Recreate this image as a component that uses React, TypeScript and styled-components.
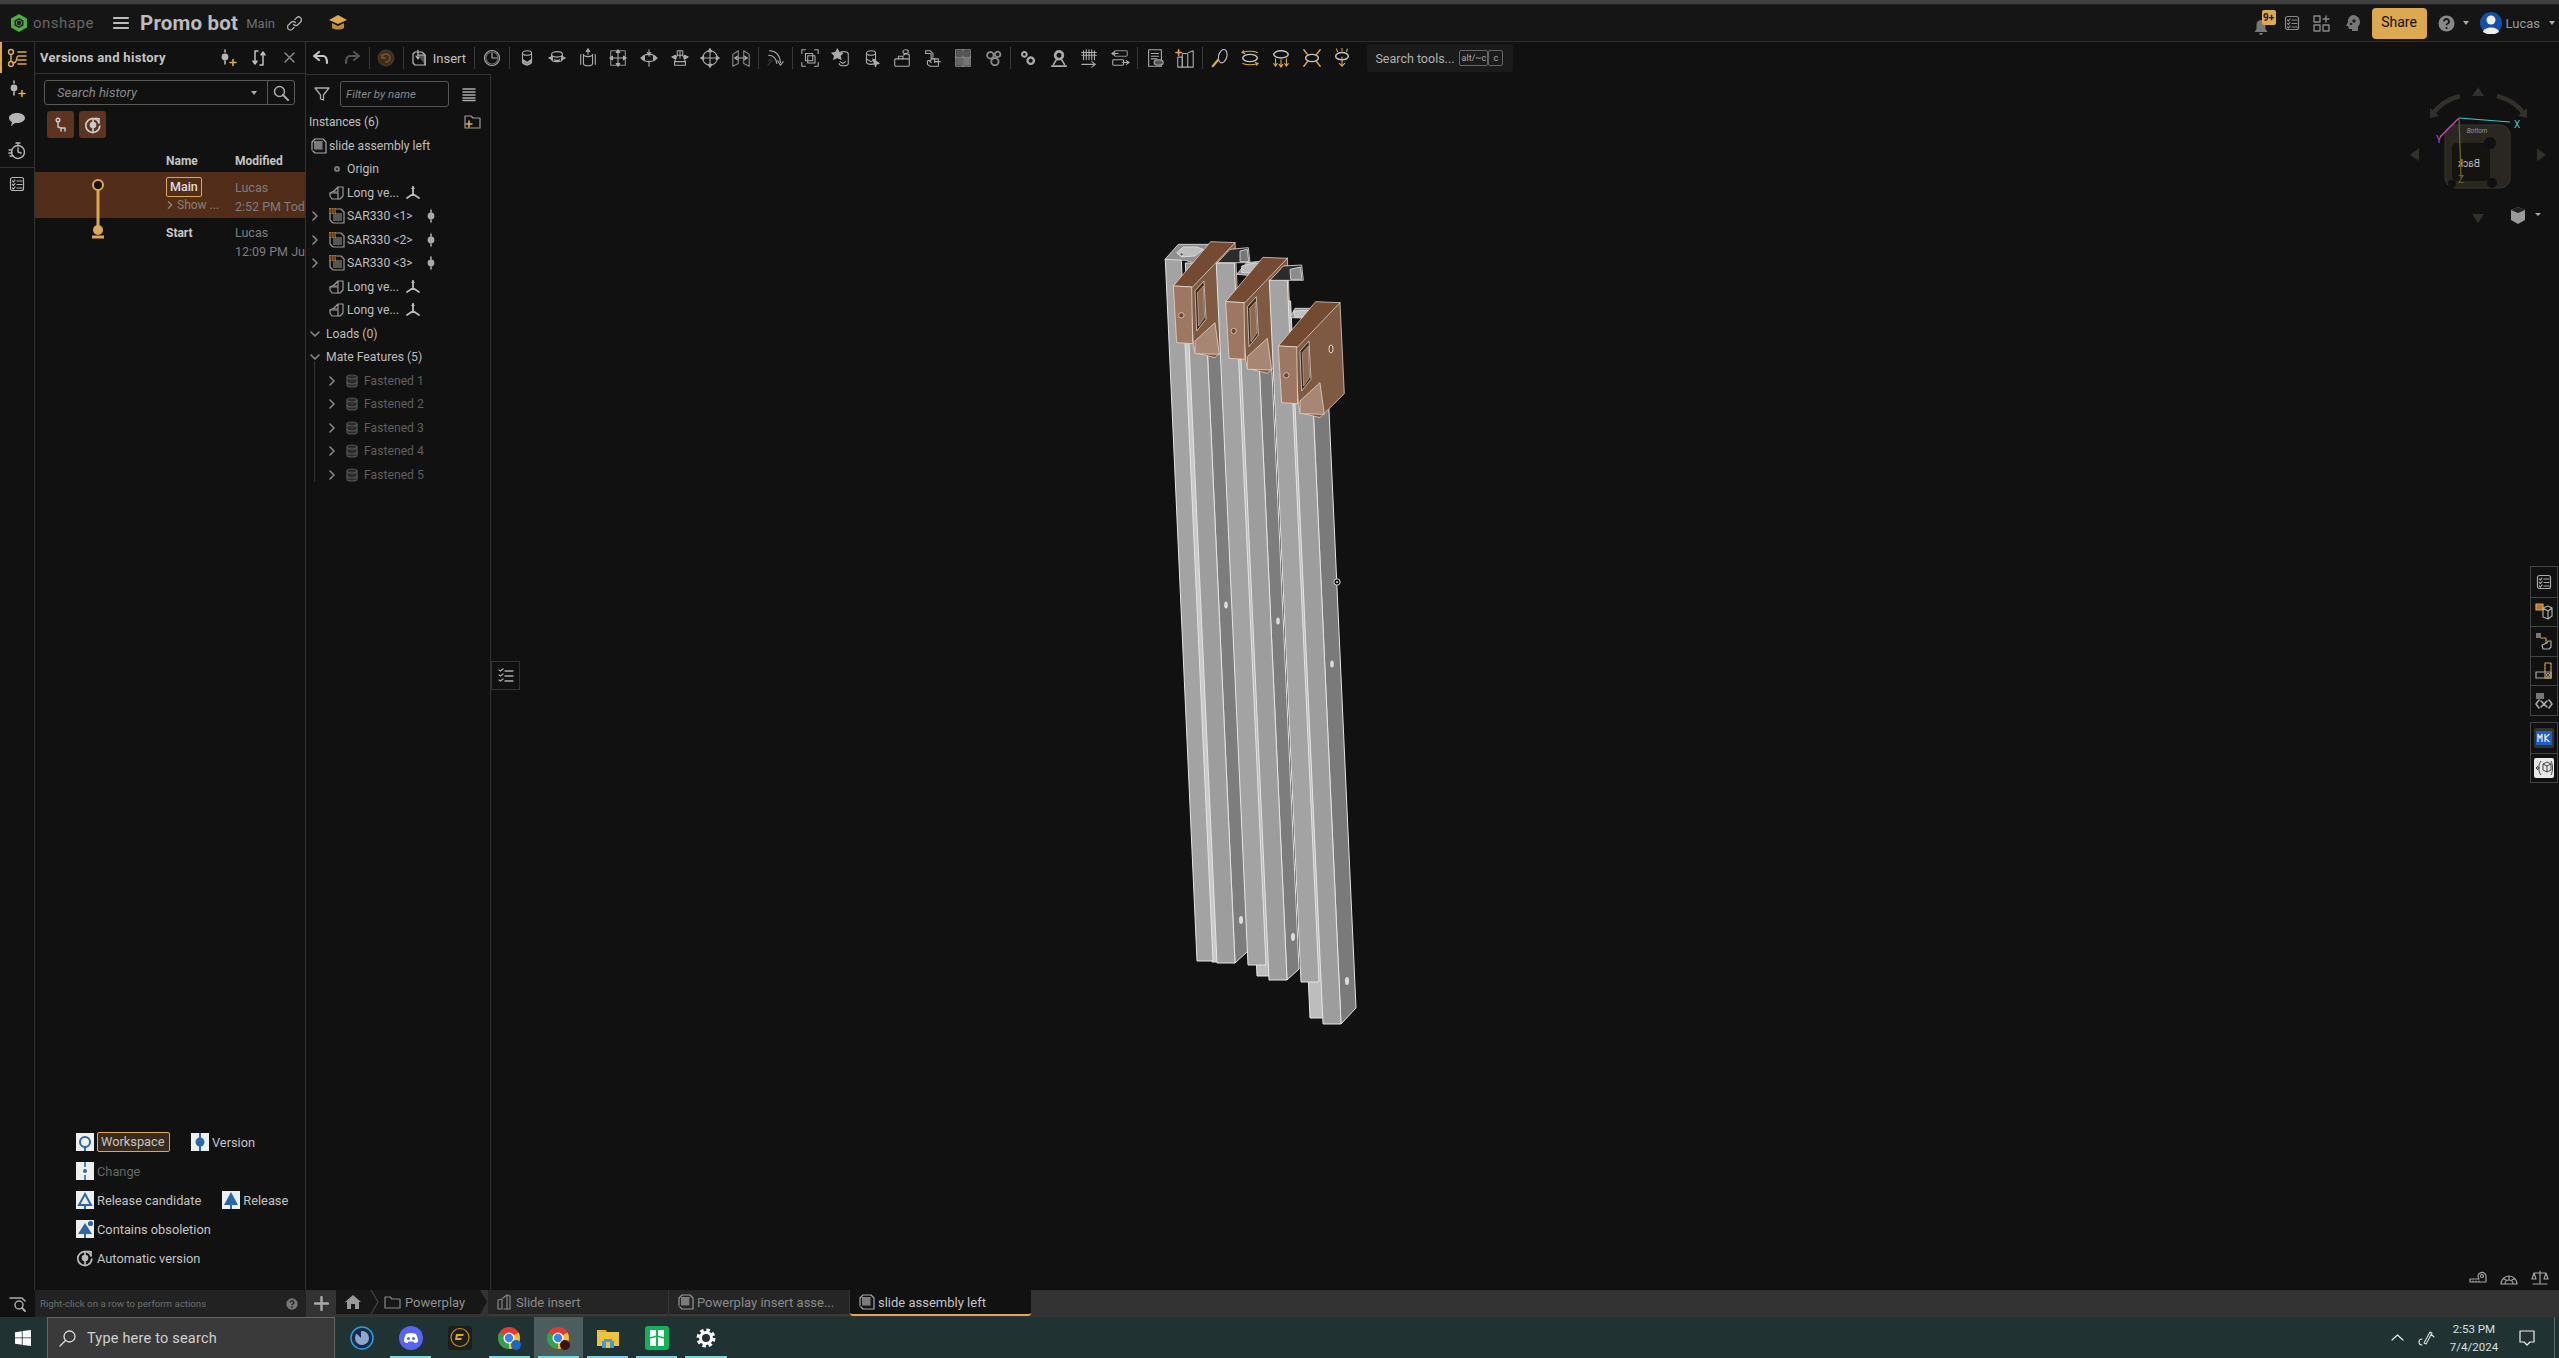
import React from 'react';
import styled, { createGlobalStyle } from 'styled-components';

const GlobalStyle = createGlobalStyle`
  html, body { margin: 0; padding: 0; background: #111; }
  body { font-family: Roboto, "Liberation Sans", sans-serif; font-size: 12px; color: #bbb; overflow: hidden; }
  * { box-sizing: border-box; }
`;

const ORANGE = '#dca850';

const S = {
  Page: styled.div`
    width: 2559px;
    height: 1358px;
    display: flex;
    flex-direction: column;
    background: #111;
  `,
  TopStrip: styled.div`
    height: 5px;
    background: #3f3f3f;
    border-bottom: 1px solid #222;
    flex: none;
  `,
  Header: styled.div`
    height: 36px;
    flex: none;
    display: flex;
    align-items: center;
    background: #151515;
    padding-left: 10px;
    padding-right: 4px;
  `,
  LogoText: styled.span`
    font-size: 15px;
    letter-spacing: 0.5px;
    color: #666;
    margin-left: 5px;
    width: 79px;
  `,
  DocTitle: styled.span`
    font-size: 20.5px;
    font-weight: 700;
    color: #bcbcbc;
    margin-left: 10px;
    letter-spacing: 0.2px;
  `,
  DocBranch: styled.span`
    font-size: 13px;
    color: #6f6f6f;
    margin-left: 8px;
    margin-right: 12px;
  `,
  HeaderRight: styled.div`
    margin-left: auto;
    display: flex;
    align-items: center;
  `,
  BellWrap: styled.div`
    position: relative;
    width: 22px;
    height: 24px;
    margin-right: 9px;
    display: flex;
    align-items: flex-end;
  `,
  BellBadge: styled.span`
    position: absolute;
    right: -1px;
    top: -1px;
    width: 14px;
    height: 15px;
    background: ${ORANGE};
    border-radius: 2px;
    color: #111;
    font-size: 10px;
    font-weight: 700;
    text-align: center;
    line-height: 15px;
  `,
  ShareButton: styled.div`
    width: 55px;
    height: 31px;
    background: ${ORANGE};
    border-radius: 4px;
    color: #111;
    font-size: 14px;
    text-align: center;
    line-height: 29px;
    margin-left: 11px;
    margin-right: 11px;
  `,
  UserName: styled.span`
    font-size: 13px;
    color: #999;
    margin-left: 4px;
    margin-right: 9px;
  `,
  Caret: styled.span`
    width: 0;
    height: 0;
    border-left: 3.5px solid transparent;
    border-right: 3.5px solid transparent;
    border-top: 4px solid #aaa;
    display: inline-block;
  `,
  Main: styled.div`
    flex: 1;
    min-height: 0;
    display: flex;
    border-top: 1px solid #2e2e2e;
  `,
  Rail: styled.div`
    width: 35px;
    flex: none;
    display: flex;
    flex-direction: column;
    align-items: stretch;
    border-right: 1px solid #333;
  `,
  RailItem: styled.div<{ $active?: boolean }>`
    height: 31px;
    display: flex;
    align-items: center;
    justify-content: center;
    color: #b5b5b5;
    border-left: 2px solid ${p => (p.$active ? ORANGE : 'transparent')};
    padding-right: 2px;
  `,
  RailRule: styled.div`
    height: 1px;
    background: #333;
    margin: 1px 0 0;
  `,
  History: styled.div`
    width: 271px;
    flex: none;
    display: flex;
    flex-direction: column;
    border-right: 1px solid #333;
  `,
  PanelHeader: styled.div`
    height: 32px;
    flex: none;
    display: flex;
    align-items: center;
    padding-left: 5px;
    border-bottom: 1px solid #333;
    color: #c4c4c4;
  `,
  PanelTitle: styled.span`
    font-size: 13px;
    font-weight: 700;
    width: 178px;
    letter-spacing: 0.3px;
  `,
  PanelTool: styled.span`
    width: 32px;
    display: flex;
    justify-content: center;
  `,
  SearchBox: styled.div`
    margin: 6px 10px 0 9px;
    height: 25px;
    border: 1px solid #5a5a55;
    border-radius: 3px;
    display: flex;
    align-items: center;
    flex: none;
  `,
  SearchText: styled.span`
    flex: 1;
    font-style: italic;
    font-size: 13px;
    color: #888;
    padding-left: 12px;
  `,
  SearchButton: styled.span`
    width: 27px;
    height: 23px;
    border-left: 1px solid #5a5a55;
    margin-left: 10px;
    display: flex;
    align-items: center;
    justify-content: center;
    color: #aaa;
  `,
  FilterButtons: styled.div`
    display: flex;
    gap: 5px;
    margin: 6px 0 0 12px;
    flex: none;
  `,
  FilterButton: styled.span`
    width: 27px;
    height: 27px;
    background: #5c3420;
    border-radius: 3px;
    display: flex;
    align-items: center;
    justify-content: center;
    color: #c9c9c9;
  `,
  TableHead: styled.div`
    height: 34px;
    flex: none;
    display: grid;
    grid-template-columns: 131px 69px 1fr;
    align-items: end;
    padding-bottom: 4px;
    font-weight: 700;
    font-size: 12px;
    color: #c4c4c4;
  `,
  TableRow: styled.div<{ $selected?: boolean }>`
    height: 46px;
    flex: none;
    display: grid;
    grid-template-columns: 131px 69px 1fr;
    background: ${p => (p.$selected ? '#522d1a' : 'transparent')};
    overflow: hidden;
    position: relative;
  `,
  NameCell: styled.div<{ $top: number }>`
    display: flex;
    flex-direction: column;
    align-items: flex-start;
    justify-content: flex-start;
    padding-top: ${p => p.$top}px;
  `,
  MainChip: styled.span`
    height: 20px;
    border: 1px solid ${ORANGE};
    border-radius: 2px;
    padding: 0 3px;
    line-height: 18px;
    color: #ddd;
    font-size: 12.5px;
    font-weight: 500;
  `,
  StartName: styled.span`
    font-weight: 700;
    font-size: 12px;
    color: #c8c8c8;
    line-height: 18px;
  `,
  ShowMore: styled.span`
    font-size: 12px;
    color: #8a8071;
    margin-top: 1px;
    white-space: nowrap;
    display: flex;
    align-items: center;
    gap: 3px;
  `,
  ModifiedCell: styled.div<{ $top: number }>`
    font-size: 12.5px;
    color: #7d7d7d;
    line-height: 19px;
    padding-top: ${p => p.$top}px;
    white-space: nowrap;
    overflow: hidden;
    padding-right: 3px;
  `,
  GraphCell: styled.div`
    position: relative;
  `,
  GraphLine: styled.svg`
    position: absolute;
    left: 0;
    top: 0;
  `,
  Legend: styled.div`
    margin-top: auto;
    flex: none;
    padding: 0 0 23px 41px;
    display: flex;
    flex-direction: column;
    gap: 11px;
  `,
  LegendRow: styled.div`
    height: 18px;
    display: flex;
    align-items: center;
    gap: 21px;
  `,
  LegendItem: styled.div<{ $dim?: boolean }>`
    display: flex;
    align-items: center;
    gap: 3px;
    font-size: 12.8px;
    color: ${p => (p.$dim ? '#666' : '#c4c4c4')};
  `,
  LegendChip: styled.span`
    border: 1px solid ${ORANGE};
    background: #3a2a1c;
    border-radius: 2px;
    height: 20px;
    padding: 0 3px;
    line-height: 18px;
    width: 73px;
  `,
  Workspace: styled.div`
    flex: 1;
    min-width: 0;
    display: flex;
    flex-direction: column;
  `,
  Toolbar: styled.div`
    height: 32px;
    flex: none;
    display: flex;
    align-items: center;
    color: #ababab;
  `,
  Tool: styled.span`
    width: 30.6px;
    flex: none;
    display: flex;
    justify-content: center;
  `,
  ToolSep: styled.span`
    width: 1px;
    height: 22px;
    background: #3a3a3a;
    margin: 0 1.5px;
    flex: none;
  `,
  InsertTool: styled.span`
    width: 67px;
    flex: none;
    display: flex;
    align-items: center;
    gap: 4px;
    padding-left: 5px;
    font-size: 13px;
    color: #c0c0c0;
  `,
  SearchTools: styled.div`
    margin-left: 10px;
    width: 146px;
    height: 28px;
    background: #1b1b1b;
    border-radius: 3px;
    display: flex;
    align-items: center;
    padding-left: 8px;
    font-size: 12.5px;
    color: #b0b0b0;
  `,
  Key: styled.span<{ $w: number }>`
    width: ${p => p.$w}px;
    height: 16px;
    border: 1px solid #666;
    border-radius: 2px;
    font-size: 9px;
    line-height: 14px;
    text-align: center;
    color: #aaa;
    flex: none;
  `,
  SearchLabel: styled.span`
    width: 84px;
    flex: none;
    white-space: nowrap;
  `,
  Canvas: styled.div`
    flex: 1;
    min-height: 0;
    display: flex;
  `,
  Instances: styled.div`
    width: 185px;
    flex: none;
    border-top: 1px solid #333;
    border-right: 1px solid #333;
    display: flex;
    flex-direction: column;
    overflow: hidden;
  `,
  FilterRow: styled.div`
    height: 32px;
    flex: none;
    display: flex;
    align-items: center;
    padding-left: 8px;
    padding-top: 6px;
    color: #aaa;
  `,
  FilterInput: styled.div`
    width: 109px;
    height: 26px;
    margin-left: 10px;
    margin-right: 12px;
    border: 1px solid #555;
    border-radius: 3px;
    font-style: italic;
    font-size: 11.5px;
    color: #888;
    line-height: 24px;
    padding-left: 5px;
  `,
  InstancesHead: styled.div`
    height: 25px;
    margin-top: 2px;
    flex: none;
    display: flex;
    align-items: center;
    justify-content: space-between;
    padding: 0 9px 0 3px;
    font-size: 12px;
    color: #c0c0c0;
  `,
  TreeRow: styled.div<{ $indent: number; $dim?: boolean }>`
    height: 23.5px;
    flex: none;
    display: flex;
    align-items: center;
    padding-left: ${p => p.$indent}px;
    font-size: 12.2px;
    color: ${p => (p.$dim ? '#5f5f5f' : '#bdbdbd')};
    white-space: nowrap;
    position: relative;
  `,
  Chevron: styled.span`
    width: 14px;
    flex: none;
    display: flex;
    justify-content: center;
    color: #888;
  `,
  Spacer: styled.span<{ $w: number }>`
    width: ${p => p.$w}px;
    flex: none;
  `,
  RowIcon: styled.span`
    width: 18px;
    flex: none;
    display: flex;
    justify-content: center;
    margin-right: 1px;
  `,
  RowLabel: styled.span<{ $w?: number }>`
    width: ${p => (p.$w ? `${p.$w}px` : 'auto')};
  `,
  MateGuide: styled.span`
    position: absolute;
    left: 8px;
    top: -8px;
    height: 121px;
    width: 1px;
    background: #333;
  `,
  Viewport: styled.div`
    flex: 1;
    min-width: 0;
    position: relative;
    background: #111;
  `,
  Model: styled.svg`
    position: absolute;
    left: 659px;
    top: 157px;
    width: 220px;
    height: 800px;
    filter: blur(0.35px);
  `,
  FloatTab: styled.div`
    position: absolute;
    left: 0;
    top: 587px;
    width: 29px;
    height: 29px;
    border: 1px solid #333;
    display: flex;
    align-items: center;
    justify-content: center;
    color: #aaa;
  `,
  Cube: styled.svg`
    position: absolute;
    right: 11px;
    top: 7px;
    width: 148px;
    height: 160px;
  `,
  SideTabs: styled.div<{ $top: number }>`
    position: absolute;
    right: 1px;
    top: ${p => p.$top}px;
    width: 28px;
    border: 1px solid #444;
    display: flex;
    flex-direction: column;
  `,
  SideTab: styled.div`
    height: 29.6px;
    display: flex;
    align-items: center;
    justify-content: center;
    color: #aaa;
    & + & { border-top: 1px solid #444; }
  `,
  MeasureTools: styled.div`
    position: absolute;
    right: 10px;
    bottom: 3px;
    display: flex;
    gap: 13px;
    color: #a5a5a5;
  `,
  Footer: styled.div`
    height: 27px;
    flex: none;
    display: flex;
    background: #333;
  `,
  FooterRail: styled.div`
    width: 35px;
    background: #111;
    display: flex;
    align-items: center;
    justify-content: center;
    color: #aaa;
  `,
  StatusBar: styled.div`
    width: 271px;
    background: #222;
    display: flex;
    align-items: center;
    padding-left: 5px;
    padding-right: 8px;
    justify-content: space-between;
    font-size: 9.7px;
    color: #6f6f6f;
  `,
  AddTab: styled.div`
    width: 30px;
    display: flex;
    align-items: center;
    justify-content: center;
    color: #aaa;
    font-size: 22px;
  `,
  Crumbs: styled.div`
    width: 151px;
    background: #171717;
    display: flex;
    align-items: center;
    color: #8f8f8f;
    font-size: 13px;
    margin-bottom: 3px;
    clip-path: polygon(0 0, calc(100% - 7px) 0, 100% 50%, calc(100% - 7px) 100%, 0 100%);
  `,
  HomeCrumb: styled.span`
    width: 34px;
    display: flex;
    justify-content: center;
    height: 24px;
    align-items: center;
  `,
  CrumbArrow: styled.svg`
    width: 14px;
    height: 24px;
    flex: none;
  `,
  FileTab: styled.div<{ $active?: boolean }>`
    width: ${p => (p.$active ? '181px' : '180px')};
    margin-left: 1px;
    background: ${p => (p.$active ? '#111' : '#252525')};
    border-bottom: 2px solid ${p => (p.$active ? ORANGE : '#3b3b3b')};
    border-radius: 0 0 3px 3px;
    display: flex;
    align-items: center;
    gap: 3px;
    padding-left: 9px;
    font-size: 13px;
    color: ${p => (p.$active ? '#c4c4c4' : '#8a8a8a')};
    height: 26px;
    white-space: nowrap;
  `,
  Taskbar: styled.div`
    height: 41px;
    flex: none;
    background: #203332;
    display: flex;
    align-items: center;
    padding-left: 15px;
    color: #fff;
    position: relative;
  `,
  TaskSearch: styled.div`
    width: 288px;
    height: 41px;
    margin-left: 16px;
    background: #3a3a3a;
    border: 1px solid #666;
    border-bottom: 0;
    display: flex;
    align-items: center;
    padding-left: 11px;
    gap: 11px;
    font-size: 14.5px;
    letter-spacing: 0.2px;
    color: #d0d0d0;
  `,
  TaskApps: styled.div`
    display: flex;
    margin-left: 2px;
    height: 41px;
  `,
  TaskApp: styled.div<{ $open?: boolean; $current?: boolean }>`
    width: 49.2px;
    height: 41px;
    display: flex;
    align-items: center;
    justify-content: center;
    background: ${p => (p.$current ? '#4b5d5c' : 'transparent')};
    position: relative;
    &::after {
      content: '';
      display: ${p => (p.$open ? 'block' : 'none')};
      position: absolute;
      left: 4px;
      right: 4px;
      bottom: 0;
      height: 2px;
      background: #76d7de;
    }
  `,
  Tray: styled.div`
    margin-left: auto;
    display: flex;
    align-items: center;
    height: 41px;
    gap: 14px;
    padding-right: 4px;
  `,
  Clock: styled.div`
    font-size: 11.5px;
    line-height: 18px;
    text-align: center;
    color: #d8e0e0;
    width: 52px;
    margin-left: -1px;
    margin-right: 4px;
  `,
  ShowDesktop: styled.span`
    width: 1px;
    height: 41px;
    background: #5d6c6b;
    margin-left: 4px;
  `,
};

// every small glyph shares this line drawing setup
const Ico = ({ s = 20, vb = 22, w = 1.2, children, c }: { s?: number; vb?: number; w?: number; c?: string; children: React.ReactNode }) => (
  <svg width={s} height={s} viewBox={`0 0 ${vb} ${vb}`} fill="none" stroke={c || 'currentColor'} strokeWidth={w} strokeLinecap="round" strokeLinejoin="round">
    {children}
  </svg>
);

const CYL = 'M6 5.5a5 2.5 0 0 1 10 0v10a5 2.5 0 0 1-10 0zM6 5.5a5 2.5 0 0 0 10 0';
const HAZE = '#8d8d8d';

const FASTEN_TOOLS: React.ReactNode[] = [
  <><path d={CYL} /><path d="M7 13l4 3 4-3v4l-4 2-4-2z" fill={HAZE} /></>,
  <><ellipse cx="11" cy="7" rx="6" ry="3" /><path d="M5 8v4a6 3 0 0 0 12 0V8" /><path d="M2 11l4-2v4zM20 11l-4-2v4zM8 13l3 2 3-2" fill="currentColor" /></>,
  <><path d="M6 7a5 2.5 0 0 0 10 0v10a5 2.5 0 0 1-10 0zM3 7v11M19 7v11" /><path d="M11 1v6M9 4l2-3 2 3" fill="currentColor" /></>,
  <><rect x="3" y="3" width="16" height="16" stroke={HAZE} /><path d="M11 3v16M3 11h16" /><path d="M11 2l-2 3h4zM11 20l-2-3h4zM2 11l3-2v4zM20 11l-3-2v4z" fill="currentColor" /></>,
  <><ellipse cx="11" cy="11" rx="8" ry="4" /><path d="M11 2v7M9 5l2 3 2-3M11 20v-6M2 11l4-2v4zM20 11l-4-2v4z" fill="currentColor" /></>,
  <><path d="M8 3h6v5H8zM5 15h12v4H5z" /><path d="M8 8l-3 7M14 8l3 7" /><path d="M2 10l4-2v4zM20 10l-4-2v4zM11 3v8" fill="currentColor" /></>,
  <><circle cx="11" cy="11" r="8" /><path d="M11 1v20M1 11h20" /><path d="M11 1l-2 3h4zM11 21l-2-3h4zM1 11l3-2v4zM21 11l-3-2v4z" fill="currentColor" /></>,
  <><path d="M2 7l6-4v14l-6 3zM20 7l-6-4v14l6 3z" stroke={HAZE} /><path d="M5 11h12M7 9l-3 2 3 2M15 9l3 2-3 2" /></>,
];
const LINK_TOOL = <><path d="M3 19l5-5h-4l3-3" stroke="#333" /><path d="M5 3c6 0 11 4 12 13M14 14l3 5 3-4M4 8c5 0 8 3 9 9" /></>;
const GROUP_TOOLS: React.ReactNode[] = [
  <><path d="M2 6V2h4M16 2h4v4M2 16v4h4M20 16v4h-4" /><rect x="6" y="6" width="8" height="8" /><rect x="8.5" y="8.5" width="8" height="8" /></>,
  <><path d="M10 5a5 2.5 0 0 1 9 1v11a5 2.5 0 0 1-10 0" /><path d="M7 1l2 4 4 .5-3 3 1 4-4-2-4 2 1-4-3-3 4-.5z" fill="currentColor" /><path d="M10 15l3 2 3-2" /></>,
  <><path d={CYL} /><path d="M6 12l5 3 5-3" /><path d="M13 12l7 5-3 .5-1 3z" fill="currentColor" /></>,
  <><rect x="3" y="12" width="16" height="8" rx="1" /><path d="M7 12V9h5v3" /><path d="M13 8a3 1.5 0 0 1 6 0v4" /><ellipse cx="15" cy="4" rx="3" ry="2" /></>,
  <><path d="M4 6h6v5l4 1v4" /><path d="M4 6V3h5l3 3v4" /><path d="M10 12h8v8H9l-3-2v-4h4" /><path d="M14 15h6M10 13l-2 1 2 2" /></>,
  <><rect x="3" y="2" width="16" height="18" stroke={HAZE} /><path d="M11 2v18M3 10h16" /><rect x="3.5" y="10.5" width="7" height="9" fill="#666" stroke="none" /><rect x="11.5" y="10.5" width="7" height="9" fill="#777" stroke="none" /><rect x="3.5" y="2.5" width="7" height="7" fill="#555" stroke="none" /><rect x="11.5" y="2.5" width="7" height="7" fill="#555" stroke="none" /></>,
  <><circle cx="7" cy="8" r="3.6" strokeDasharray="2 1.2" strokeWidth="2" stroke={HAZE} /><circle cx="15" cy="7" r="3" strokeDasharray="2 1.2" strokeWidth="2" stroke={HAZE} /><circle cx="12" cy="15" r="4" strokeDasharray="2 1.2" strokeWidth="2" stroke={HAZE} /></>,
];
const GEAR_TOOLS: React.ReactNode[] = [
  <><circle cx="7" cy="7" r="2.6" strokeWidth="2.2" strokeDasharray="1.7 1" /><circle cx="14" cy="14" r="3.5" strokeWidth="2.6" strokeDasharray="2 1" /></>,
  <><circle cx="11" cy="8" r="4.2" strokeWidth="3" strokeDasharray="2 1.2" /><path d="M8 13l-3 5M14 13l3 5M3 20h16" strokeWidth="1.8" /></>,
  <><path d="M5 3v10M8 2v11M11 2v11M14 2v11M17 3v10M3 5h16M3 8h16" strokeWidth="1.2" /><path d="M3 18h14M14 15l4 3-4 3" /></>,
  <><rect x="5" y="3" width="14" height="6" rx="1" stroke={HAZE} /><rect x="3" y="13" width="12" height="6" rx="1" /><path d="M3 6h6M5 4l-3 2 3 2M14 16h6M18 14l3 2-3 2" /></>,
];
const SKETCH_TOOLS: React.ReactNode[] = [
  <><rect x="4" y="2" width="14" height="18" /><path d="M7 6h8M7 9h8M7 12h6" /><ellipse cx="15" cy="16" rx="5" ry="3" fill="#555" /></>,
  <><rect x="8" y="6" width="6" height="15" /><path d="M15 5l5-2v18h-6" /><path d="M4 2v6M1 5h6" stroke={ORANGE} strokeWidth="1.8" /><rect x="3" y="10" width="5" height="11" /></>,
];
const MATE_TOOLS: React.ReactNode[] = [
  <><ellipse cx="14" cy="9" rx="4.5" ry="7.5" transform="rotate(15 14 9)" stroke="#c4c4c4" /><path d="M3 20l6-7" stroke={ORANGE} strokeWidth="2.4" /></>,
  <><ellipse cx="11" cy="11" rx="8" ry="4" stroke="#c4c4c4" strokeWidth="1.6" /><path d="M3 5c4-2 12-2 16 0M3 17c4 2 12 2 16 0M4 3L2 5l3 1M18 19l2-2-3-1" stroke={ORANGE} /></>,
  <><ellipse cx="11" cy="7" rx="8" ry="4" stroke="#c4c4c4" strokeWidth="1.6" /><path d="M5 12v7M11 13v7M17 12v7M3 17l2 3 2-3M9 18l2 3 2-3M15 17l2 3 2-3" stroke={ORANGE} /></>,
  <><ellipse cx="11" cy="11" rx="7" ry="4" stroke="#c4c4c4" strokeWidth="1.6" /><path d="M2 2l4 5M20 2l-4 5M2 20l4-5M20 20l-4-5" stroke={ORANGE} strokeWidth="1.6" /></>,
  <><ellipse cx="11" cy="9" rx="7" ry="4" stroke="#c4c4c4" strokeWidth="1.6" /><path d="M11 10v10M8 17l3 3 3-3M5 1l1 3M11 0v3M17 1l-1 3" stroke={ORANGE} /></>,
];

const CubeIcon = ({ s = 16, c = '#aaa' }: { s?: number; c?: string }) => (
  <Ico s={s} vb={16} c={c}>
    <path d="M4 1h8l3 3v11H4L1 12V4z" />
    <rect x="3" y="3" width="9" height="9" fill="#7b7b7b" stroke="none" />
    <path d="M1 12h11V4" stroke="#222" />
  </Ico>
);
const PartIcon = () => (
  <Ico s={16} vb={16} c="#999">
    <path d="M5 6l4-4h5v9l-3 3H3L1 11V8l4-2zM9 2v5H5" />
    <path d="M1 8h8v6" />
  </Ico>
);
const SarIcon = () => (
  <Ico s={16} vb={16} c="#999">
    <path d="M4 1h8l3 3v11H4L1 12V4z" />
    <rect x="4" y="5" width="9" height="8" fill="#555" stroke="none" />
    <rect x="0" y="0" width="7" height="6" fill="#b5772f" stroke="none" />
    <path d="M0 2h7M0 4h7M2.5 0v6M5 0v6" stroke="#111" strokeWidth=".6" />
  </Ico>
);
const MateConnector = () => (
  <Ico s={16} vb={16} c="#bbb" w={1.8}>
    <path d="M8 2v7M8 9l-6 4M8 9l6 4" />
    <path d="M8 1l-2 3h4z" fill="#bbb" stroke="none" />
  </Ico>
);
const BranchDot = () => (
  <Ico s={14} vb={14} c="#aaa" w={1.6}>
    <path d="M7 1v12" strokeDasharray="2 1.4" />
    <circle cx="7" cy="7" r="2.6" fill="#aaa" />
  </Ico>
);
const FastenIcon = () => (
  <Ico s={14} vb={14} c="#555">
    <path d="M2 3a5 2 0 0 1 10 0v8a5 2 0 0 1-10 0z" fill="#2b2b2b" />
    <path d="M2 3a5 2 0 0 0 10 0M2 8a5 2 0 0 0 10 0" />
  </Ico>
);
const ChevronRight = () => (
  <Ico s={10} vb={10} w={1.6}><path d="M3 1l4 4-4 4" /></Ico>
);
const ChevronDown = () => (
  <Ico s={10} vb={10} w={1.6}><path d="M1 3l4 4 4-4" /></Ico>
);
const ChecklistIcon = ({ s = 16 }: { s?: number }) => (
  <Ico s={s} vb={16}>
    <rect x="1.5" y="1.5" width="13" height="13" rx="2" />
    <path d="M3.5 5l1 1 1.5-2M3.5 8.5l1 1 1.5-2M3.5 12l1 1 1.5-2M8 5h5M8 8.5h5M8 12h5" />
  </Ico>
);
const BranchPlus = () => (
  <Ico s={18} vb={18} c="#b5b5b5" w={1.6}>
    <path d="M6 1v2M6 12v3" />
    <circle cx="6" cy="8" r="2.6" fill="#b5b5b5" />
    <path d="M11 13.5h6M14 10.5v6" stroke={ORANGE} />
  </Ico>
);

const LegendGlyph = ({ kind }: { kind: string }) => (
  <svg width="18" height="18" viewBox="0 0 18 18">
    <rect width="18" height="18" fill="#eef0f0" />
    {kind === 'workspace' && <><circle cx="9" cy="9" r="5" fill="none" stroke="#2a67ad" strokeWidth="2" /><path d="M9 14v4" stroke="#2a67ad" strokeWidth="2" /></>}
    {kind === 'version' && <><path d="M9 0v18" stroke="#2a67ad" strokeWidth="2" /><circle cx="9" cy="9" r="4.5" fill="#2a67ad" /></>}
    {kind === 'change' && <><path d="M9 0v5M9 13v5" stroke="#2a67ad" strokeWidth="1.6" /><circle cx="9" cy="9" r="2" fill="#2a67ad" /></>}
    {kind === 'candidate' && <path d="M9 3l6 11H3zM9 14v4" fill="none" stroke="#2a67ad" strokeWidth="2" />}
    {kind === 'release' && <><path d="M9 1l7 13H2z" fill="#2a67ad" /><path d="M9 14v4" stroke="#2a67ad" strokeWidth="2" /></>}
    {kind === 'obsolete' && <><path d="M9 3l7 11H2z" fill="#2a67ad" /><path d="M9 14v4" stroke="#2a67ad" strokeWidth="2" /><circle cx="14.5" cy="3.5" r="2.6" fill="#2a67ad" /></>}
  </svg>
);

const AutoVersion = ({ s = 16, c = '#bbb' }: { s?: number; c?: string }) => (
  <Ico s={s} vb={16} c={c} w={1.5}>
    <path d="M13.5 6A6.2 6.2 0 1 0 14 9" />
    <path d="M10 2l3.5 .5L13 6" />
    <path d="M8 2v12" />
    <circle cx="8" cy="8" r="2.2" fill={c} />
  </Ico>
);

// rails lean to the right as they go down the screen
const LEAN = 0.0452;
type Face = { left: number; right: number; top: number; bottom: number; bottomR?: number; fill: string };
const shifted = (x: number, from: number, y: number) => x - LEAN * (from - y);
const facePoints = (f: Face) => {
  const br = f.bottomR ?? f.bottom;
  return [
    `${shifted(f.left, f.bottom, f.top)},${f.top}`,
    `${shifted(f.right, br, f.top)},${f.top}`,
    `${f.right},${br}`,
    `${f.left},${f.bottom}`,
  ].join(' ');
};

const RAIL_FACES: Face[][] = [
  [
    { left: 1212, right: 1219, top: 300, bottom: 961, fill: '#c9c9c9' },
    { left: 1197, right: 1213, top: 258, bottom: 960, fill: '#a3a3a3' },
    { left: 1235, right: 1248, top: 262, bottom: 962, bottomR: 950, fill: '#7d7d7d' },
    { left: 1217, right: 1235, top: 262, bottom: 962, fill: '#9d9d9d' },
  ],
  [
    { left: 1257, right: 1270, top: 300, bottom: 975, fill: '#bdbdbd' },
    { left: 1248, right: 1266, top: 262, bottom: 964, fill: '#a3a3a3' },
    { left: 1287, right: 1299, top: 310, bottom: 979, bottomR: 968, fill: '#7d7d7d' },
    { left: 1269, right: 1287, top: 310, bottom: 979, fill: '#9d9d9d' },
  ],
  [
    { left: 1310, right: 1323, top: 300, bottom: 1017, fill: '#bdbdbd' },
    { left: 1301, right: 1319, top: 279, bottom: 981, fill: '#a3a3a3' },
    { left: 1341, right: 1356, top: 330, bottom: 1023, bottomR: 1007, fill: '#7a7a7a' },
    { left: 1323, right: 1341, top: 330, bottom: 1023, fill: '#9d9d9d' },
  ],
];
const RAIL_HOLES = [
  [1226, 604, 1241, 919],
  [1278, 620, 1293, 936],
  [1332, 663, 1347, 980],
];
// the rest of the drawing was measured on a 3x crop with its corner at 1140,220
const RAIL_TOPS = [
  <><polygon points="75,115 115,70 210,70 230,75 160,125 135,118" fill="#8e8e8e" /><polygon points="110,95 130,78 170,78 190,85 165,105 125,108" fill="#bdbdbd" /><circle cx="125" cy="100" r="5" fill="#555" /><circle cx="190" cy="95" r="5" fill="#555" /></>,
  <><polygon points="232,125 270,85 325,80 330,125 292,125" fill="#2c2c2c" /><polygon points="300,90 322,85 326,122 300,122" fill="#777" /><polygon points="290,160 320,125 370,120 385,125 345,165" fill="#979797" /><polygon points="305,135 345,125 360,130 340,155 305,155" fill="#bcbcbc" /></>,
  <><polygon points="390,178 430,135 485,132 490,178 445,178" fill="#2c2c2c" /><polygon points="450,145 482,138 486,175 452,175" fill="#8c8c8c" /><polygon points="450,290 465,262 530,262 545,270 510,292" fill="#979797" /><polygon points="460,270 500,268 520,272 500,288 465,288" fill="#c2c2c2" /></>,
];

const Bracket = ({ dx, dy }: { dx: number; dy: number }) => (
  <g transform={`translate(${dx} ${dy})`} stroke="#ecdcd2" strokeWidth="2.2" strokeLinejoin="round">
    <polygon points="150,198 285,63 298,338 225,410 165,395 160,370" fill="#7f5a43" />
    <polygon points="100,195 212,62 285,65 158,198" fill="#744a32" />
    <polygon points="100,195 155,198 158,368 110,365" fill="#9d7762" />
    <polygon points="165,210 192,180 198,295 170,330" fill="#3b2a20" />
    <polygon points="172,215 190,195 194,288 176,315" fill="#8e6a52" strokeWidth="1.4" />
    <polygon points="165,360 225,305 238,400 165,398" fill="#a88674" />
    <circle cx="124" cy="283" r="8" fill="#6a4632" />
  </g>
);

const DIMMED = '#33302b';

const App = () => {
  return (
    <S.Page>
      <GlobalStyle />
      <S.TopStrip />
      <S.Header>
        <svg width="18" height="20" viewBox="0 0 18 20">
          <path d="M9 1l8 4.5v9L9 19l-8-4.5v-9z" fill="#4caf3a" />
          <path d="M9 5l4.5 2.5v5L9 15l-4.5-2.5v-5z" fill="#222" />
          <path d="M9 7l2.5 1.5v3L9 13l-2.5-1.5v-3z" fill="none" stroke="#777" />
        </svg>
        <S.LogoText>onshape</S.LogoText>
        <Ico s={18} vb={18} c="#bbb" w={2.2}><path d="M2 4h14M2 9h14M2 14h14" /></Ico>
        <S.DocTitle>Promo bot</S.DocTitle>
        <S.DocBranch>Main</S.DocBranch>
        <Ico s={15} vb={16} c="#aaa" w={1.5}><path d="M7 9a3 3 0 0 0 4.5.3l3-3a3 3 0 0 0-4.3-4.3L8.5 3.7M9 7a3 3 0 0 0-4.5-.3l-3 3a3 3 0 0 0 4.3 4.3L7.5 12.3" /></Ico>
        <S.Spacer $w={26} />
        <svg width="20" height="18" viewBox="0 0 20 18">
          <path d="M10 1L1 6l9 4 9-4z" fill={ORANGE} />
          <path d="M4 9v5c3 2 9 2 12 0V9l-6 3z" fill="#b98a3c" />
        </svg>
        <S.HeaderRight>
          <S.BellWrap>
            <svg width="16" height="16" viewBox="0 0 16 16"><path d="M8 1a4.5 4.5 0 0 1 4.5 4.5V10l2 3H1.5l2-3V5.500A4.5 4.5 0 0 1 8 1zM6 14h4a2 2 0 0 1-4 0z" fill="#777" /></svg>
            <S.BellBadge>9+</S.BellBadge>
          </S.BellWrap>
          <Ico s={16} vb={16} c="#888">
            <rect x="1.5" y="1.5" width="13" height="13" rx="2" />
            <path d="M3.5 5l1 1 1.5-2M3.5 8.5l1 1 1.5-2M3.5 12l1 1 1.5-2M8 5h5M8 8.5h5M8 12h5" />
          </Ico>
          <S.Spacer $w={13} />
          <Ico s={17} vb={17} c="#888" w={1.4}>
            <rect x="1" y="1" width="6" height="6" /><rect x="1" y="10" width="6" height="6" /><rect x="10" y="10" width="6" height="6" />
            <path d="M13 1v6M10 4h6" />
          </Ico>
          <S.Spacer $w={15} />
          <svg width="16" height="18" viewBox="0 0 16 18"><path d="M8 1a7 7 0 0 1 7 7c0 3-2 4-2 5v4H7v-2H4l-1-3H1l2-4a6 6 0 0 1 5-7z" fill="#777" /><circle cx="9" cy="7" r="1.8" fill="#222" /><circle cx="6" cy="10" r="1.3" fill="#222" /></svg>
          <S.ShareButton>Share</S.ShareButton>
          <svg width="17" height="17" viewBox="0 0 17 17"><circle cx="8.5" cy="8.5" r="8" fill="#888" /><path d="M6 6.5a2.5 2.5 0 1 1 3.5 2.3c-.7.3-1 .8-1 1.5" fill="none" stroke="#151515" strokeWidth="1.8" /><circle cx="8.5" cy="13" r="1.1" fill="#151515" /></svg>
          <S.Spacer $w={8} />
          <S.Caret />
          <S.Spacer $w={11} />
          <svg width="22" height="22" viewBox="0 0 22 22"><circle cx="11" cy="11" r="11" fill="#1550a8" /><circle cx="11" cy="8" r="4.5" fill="#eee" /><path d="M3 20c1-6 15-6 16 0l-4 2H7z" fill="#eee" /></svg>
          <S.UserName>Lucas</S.UserName>
          <S.Caret />
        </S.HeaderRight>
      </S.Header>

      <S.Main>
        <S.Rail>
          <S.RailItem $active>
            <Ico s={20} vb={20} c={ORANGE} w={1.5}>
              <circle cx="4" cy="4" r="2.4" /><circle cx="4" cy="16" r="2.4" />
              <path d="M4 6.5v7M6 15c5 0 3-7 5-7M11 4h8M11 8h8M11 12h8M11 16h8" />
            </Ico>
          </S.RailItem>
          <S.RailItem><BranchPlus /></S.RailItem>
          <S.RailItem>
            <svg width="18" height="16" viewBox="0 0 18 16"><path d="M9 1c4.5 0 8 2.2 8 5s-3.5 5-8 5H7l-4 3 1-4C2 9 1 7.5 1 6c0-2.800 3.5-5 8-5z" fill="#b5b5b5" /></svg>
          </S.RailItem>
          <S.RailItem>
            <Ico s={18} vb={18} w={1.4}>
              <circle cx="10" cy="10" r="6.5" /><path d="M8 1h4M10 1v3M10 6v4l3 1M1 8h3M1 11h3M2 14h3" />
            </Ico>
          </S.RailItem>
          <S.RailRule />
          <S.RailItem><ChecklistIcon /></S.RailItem>
        </S.Rail>

        <S.History>
          <S.PanelHeader>
            <S.PanelTitle>Versions and history</S.PanelTitle>
            <S.PanelTool><BranchPlus /></S.PanelTool>
            <S.PanelTool>
              <Ico s={16} vb={16} c="#c0c0c0" w={1.5}>
                <path d="M4 1v12M12 3v12M4 1h3M2 11l2 3 2-3M10 5l2-3 2 3M12 15H9" />
              </Ico>
            </S.PanelTool>
            <S.PanelTool>
              <Ico s={11} vb={11} c="#888" w={1.5}><path d="M1 1l9 9M10 1l-9 9" /></Ico>
            </S.PanelTool>
          </S.PanelHeader>
          <S.SearchBox>
            <S.SearchText>Search history</S.SearchText>
            <S.Caret />
            <S.SearchButton>
              <Ico s={16} vb={16} w={1.5}><circle cx="6.5" cy="6.5" r="5" /><path d="M10 10l5 5" strokeWidth="2" /></Ico>
            </S.SearchButton>
          </S.SearchBox>
          <S.FilterButtons>
            <S.FilterButton>
              <Ico s={16} vb={16} w={1.5}>
                <circle cx="5" cy="3" r="1.8" /><path d="M5 5v5l3 1v3M8 11h4v3" />
              </Ico>
            </S.FilterButton>
            <S.FilterButton><AutoVersion s={18} c="#c9c9c9" /></S.FilterButton>
          </S.FilterButtons>
          <S.TableHead>
            <span />
            <span>Name</span>
            <span>Modified</span>
          </S.TableHead>
          <S.TableRow $selected>
            <S.GraphCell>
              <S.GraphLine width="131" height="46">
                <path d="M63 18v28" stroke={ORANGE} strokeWidth="3" />
                <circle cx="63" cy="13" r="5" fill="#111" stroke={ORANGE} strokeWidth="2" />
              </S.GraphLine>
            </S.GraphCell>
            <S.NameCell $top={5}>
              <S.MainChip>Main</S.MainChip>
              <S.ShowMore><Ico s={8} vb={10} w={1.8}><path d="M3 1l4 4-4 4" /></Ico>Show ...</S.ShowMore>
            </S.NameCell>
            <S.ModifiedCell $top={6}>Lucas<br />2:52 PM Today</S.ModifiedCell>
          </S.TableRow>
          <S.TableRow>
            <S.GraphCell>
              <S.GraphLine width="131" height="46">
                <path d="M63 0v12" stroke={ORANGE} strokeWidth="3" />
                <circle cx="63" cy="12" r="5" fill={ORANGE} />
                <path d="M57 19h12" stroke={ORANGE} strokeWidth="3" />
              </S.GraphLine>
            </S.GraphCell>
            <S.NameCell $top={6}>
              <S.StartName>Start</S.StartName>
            </S.NameCell>
            <S.ModifiedCell $top={5}>Lucas<br />12:09 PM Jul 2</S.ModifiedCell>
          </S.TableRow>
          <S.Legend>
            <S.LegendRow>
              <S.LegendItem><LegendGlyph kind="workspace" /><S.LegendChip>Workspace</S.LegendChip></S.LegendItem>
              <S.LegendItem><LegendGlyph kind="version" />Version</S.LegendItem>
            </S.LegendRow>
            <S.LegendRow>
              <S.LegendItem $dim><LegendGlyph kind="change" />Change</S.LegendItem>
            </S.LegendRow>
            <S.LegendRow>
              <S.LegendItem><LegendGlyph kind="candidate" />Release candidate</S.LegendItem>
              <S.LegendItem><LegendGlyph kind="release" />Release</S.LegendItem>
            </S.LegendRow>
            <S.LegendRow>
              <S.LegendItem><LegendGlyph kind="obsolete" />Contains obsoletion</S.LegendItem>
            </S.LegendRow>
            <S.LegendRow>
              <S.LegendItem><AutoVersion s={18} />Automatic version</S.LegendItem>
            </S.LegendRow>
          </S.Legend>
        </S.History>

        <S.Workspace>
          <S.Toolbar>
            <S.Tool>
              <Ico s={18} vb={18} c="#c4c4c4" w={2.2}><path d="M7 3L2 7l5 4M3 7h8c3 0 4 3 4 7" /></Ico>
            </S.Tool>
            <S.Tool>
              <Ico s={18} vb={18} c="#555" w={2.2}><path d="M11 3l5 4-5 4M15 7H7c-3 0-4 3-4 7" /></Ico>
            </S.Tool>
            <S.ToolSep />
            <S.Tool>
              <Ico s={18} vb={18} c="#4a3420" w={2}><circle cx="9" cy="9" r="7.5" fill="#3a2b1c" /><path d="M5 9a4 4 0 1 1 4 4M5 6v3h3" stroke="#6b5030" /></Ico>
            </S.Tool>
            <S.ToolSep />
            <S.InsertTool>
              <Ico s={18} vb={18} c="#bbb">
                <path d="M4 3h7l3 3v10H4L2 14V5zM7 1v8M5 7l2 3 2-3" /><path d="M7 6h7v10" fill="#555" />
              </Ico>
              Insert
            </S.InsertTool>
            <S.ToolSep />
            <S.Tool>
              <Ico s={18} vb={18} c="#aaa"><circle cx="9" cy="9" r="7.5" /><circle cx="9" cy="9" r="6" stroke="#666" /><path d="M9 4v5h5" /></Ico>
            </S.Tool>
            <S.ToolSep />
            {FASTEN_TOOLS.map((t, i) => <S.Tool key={i}><Ico>{t}</Ico></S.Tool>)}
            <S.ToolSep />
            <S.Tool><Ico>{LINK_TOOL}</Ico></S.Tool>
            <S.ToolSep />
            {GROUP_TOOLS.map((t, i) => <S.Tool key={i}><Ico>{t}</Ico></S.Tool>)}
            <S.ToolSep />
            {GEAR_TOOLS.map((t, i) => <S.Tool key={i}><Ico>{t}</Ico></S.Tool>)}
            <S.ToolSep />
            {SKETCH_TOOLS.map((t, i) => <S.Tool key={i}><Ico>{t}</Ico></S.Tool>)}
            <S.ToolSep />
            {MATE_TOOLS.map((t, i) => <S.Tool key={i}><Ico>{t}</Ico></S.Tool>)}
            <S.SearchTools>
              <S.SearchLabel>Search tools...</S.SearchLabel>
              <S.Key $w={29}>alt/~c</S.Key>
              <S.Key $w={15}>c</S.Key>
            </S.SearchTools>
          </S.Toolbar>

          <S.Canvas>
            <S.Instances>
              <S.FilterRow>
                <Ico s={16} vb={16} w={1.3}><path d="M1 2h14l-5.5 7v5l-3-1V9z" /></Ico>
                <S.FilterInput>Filter by name</S.FilterInput>
                <Ico s={16} vb={16} w={1.5}><path d="M2 3h12M2 6h12M2 9h12M2 12h12M2 14.5h12" /></Ico>
              </S.FilterRow>
              <S.InstancesHead>
                Instances (6)
                <Ico s={17} vb={17} c="#999" w={1.2}>
                  <path d="M1 3h6l2 2h7v10H1z" />
                  <path d="M5 8v6M2 11h6" stroke={ORANGE} strokeWidth="1.6" />
                </Ico>
              </S.InstancesHead>
              <S.TreeRow $indent={4}><S.RowIcon><CubeIcon /></S.RowIcon>slide assembly left</S.TreeRow>
              <S.TreeRow $indent={22}><S.RowIcon><svg width="8" height="8"><circle cx="4" cy="4" r="3" fill="#777" /><circle cx="4" cy="4" r="1" fill="#222" /></svg></S.RowIcon>Origin</S.TreeRow>
              <S.TreeRow $indent={22}><S.RowIcon><PartIcon /></S.RowIcon><S.RowLabel $w={58}>Long ve...</S.RowLabel><MateConnector /></S.TreeRow>
              {['SAR330 <1>', 'SAR330 <2>', 'SAR330 <3>'].map(name => (
                <S.TreeRow $indent={2} key={name}>
                  <S.Chevron><ChevronRight /></S.Chevron>
                  <S.Spacer $w={6} />
                  <S.RowIcon><SarIcon /></S.RowIcon>
                  <S.RowLabel $w={77}>{name}</S.RowLabel>
                  <BranchDot />
                </S.TreeRow>
              ))}
              <S.TreeRow $indent={22}><S.RowIcon><PartIcon /></S.RowIcon><S.RowLabel $w={58}>Long ve...</S.RowLabel><MateConnector /></S.TreeRow>
              <S.TreeRow $indent={22}><S.RowIcon><PartIcon /></S.RowIcon><S.RowLabel $w={58}>Long ve...</S.RowLabel><MateConnector /></S.TreeRow>
              <S.TreeRow $indent={2}><S.Chevron><ChevronDown /></S.Chevron><S.Spacer $w={4} />Loads (0)</S.TreeRow>
              <S.TreeRow $indent={2}><S.Chevron><ChevronDown /></S.Chevron><S.Spacer $w={4} />Mate Features (5)</S.TreeRow>
              {[1, 2, 3, 4, 5].map(n => (
                <S.TreeRow $indent={19} $dim key={n}>
                  {n === 1 && <S.MateGuide />}
                  <S.Chevron><ChevronRight /></S.Chevron>
                  <S.Spacer $w={4} />
                  <S.RowIcon><FastenIcon /></S.RowIcon>
                  <S.Spacer $w={2} />
                  Fastened {n}
                </S.TreeRow>
              ))}
            </S.Instances>

            <S.Viewport>
              <S.FloatTab>
                <Ico s={16} vb={16} w={1.3}><path d="M1 2l1.5 1L5 1M1 7l1.5 1L5 6M1 12l1.5 1L5 11M7 3h8M7 8h8M7 13h8" /></Ico>
              </S.FloatTab>

              <S.Model viewBox="1150 230 220 800">
                {RAIL_FACES.map((rail, i) => (
                  <g key={i}>
                    {rail.map((f, j) => (
                      <polygon key={j} points={facePoints(f)} fill={f.fill} stroke="#e4e4e4" strokeWidth="1" />
                    ))}
                    <g transform="translate(1140 220) scale(0.3333)" stroke="#e4e4e4" strokeWidth="2.4">
                      {RAIL_TOPS[i]}
                    </g>
                    <ellipse cx={RAIL_HOLES[i][0]} cy={RAIL_HOLES[i][1]} rx="1.8" ry="3.5" fill="#ddd" />
                    <ellipse cx={RAIL_HOLES[i][2]} cy={RAIL_HOLES[i][3]} rx="2" ry="4" fill="#ddd" />
                    <g transform="translate(1140 220) scale(0.3333)">
                      <Bracket dx={[0, 157, 315][i]} dy={[0, 47, 180][i]} />
                    </g>
                  </g>
                ))}
                <ellipse cx="1331" cy="348" rx="2" ry="4" fill="#6a4632" stroke="#ecdcd2" />
                <circle cx="1337" cy="581" r="3.2" fill="#111" stroke="#ddd" />
                <circle cx="1337" cy="581" r="1" fill="#ddd" />
              </S.Model>

              <S.Cube viewBox="2400 80 148 160">
                <path d="M2460 95c-12 3-22 10-28 19M2497 95c12 3 22 10 28 19" fill="none" stroke={DIMMED} strokeWidth="4.5" />
                <path d="M2430 117l0-10 9 8zM2527 117l0-10-9 8z" fill={DIMMED} />
                <path d="M2478 86l-6 9 12 0zM2478 222l-6-9 12 0zM2410 154l9-7 0 13zM2546 154l-9-7 0 13z" fill={DIMMED} />
                <rect x="2445" y="124" width="65" height="63" rx="10" fill="#2a2721" stroke="#3a372f" />
                <rect x="2452" y="142" width="38" height="38" rx="5" fill="#141310" />
                <circle cx="2490" cy="142" r="6" fill="#111" />
                <circle cx="2492" cy="182" r="5" fill="#111" />
                <circle cx="2452" cy="183" r="4" fill="#111" />
                <text x="2477" y="132" fontSize="6.5" fontStyle="italic" fill="#999" textAnchor="middle" fontFamily="Roboto, sans-serif">Bottom</text>
                <text transform="translate(2469 166) scale(-1 1)" fontSize="10" fill="#bbb" textAnchor="middle" fontFamily="Roboto, sans-serif">Back</text>
                <path d="M2459 117l51 4" stroke="#3cc6c6" strokeWidth="1.2" />
                <path d="M2459 117l-19 19" stroke="#c24ec2" strokeWidth="1.2" />
                <path d="M2459 117l2 60" stroke="#6e6a20" strokeWidth="1.2" />
                <text x="2514" y="127" fontSize="10" fill="#3cc6c6" fontFamily="Roboto, sans-serif">X</text>
                <text x="2436" y="142" fontSize="10" fill="#c24ec2" fontFamily="Roboto, sans-serif">Y</text>
                <text x="2458" y="182" fontSize="10" fill="#6e6a20" fontFamily="Roboto, sans-serif">Z</text>
                <path d="M2511 209l7-3 7 3v10l-7 4-7-4z" fill="#999" />
                <path d="M2511 209l7 3 7-3-7-3z" fill="#222" />
                <path d="M2535 212h6l-3 3z" fill="#aaa" />
              </S.Cube>

              <S.SideTabs $top={492}>
                <S.SideTab><ChecklistIcon /></S.SideTab>
                <S.SideTab>
                  <Ico s={18} vb={18} c="#aaa">
                    <path d="M8 5l5-2 4 2v8l-4 3-5-2zM8 5l5 3 4-3M13 8v8" />
                    <rect x="1" y="1" width="7" height="6" fill="#b5772f" stroke={ORANGE} />
                  </Ico>
                </S.SideTab>
                <S.SideTab>
                  <Ico s={18} vb={18} c="#aaa">
                    <rect x="1" y="1" width="5" height="5" fill="#777" stroke="none" />
                    <path d="M6 6h5v5" stroke={ORANGE} strokeDasharray="2 1" />
                    <path d="M7 13l5-2 1-2h3v6l-2 2H8z" />
                  </Ico>
                </S.SideTab>
                <S.SideTab>
                  <Ico s={18} vb={18} c="#aaa">
                    <rect x="1" y="10" width="15" height="6" />
                    <rect x="10" y="1" width="6" height="15" stroke={ORANGE} strokeDasharray="2 1" />
                    <circle cx="13" cy="13" r="1.5" />
                  </Ico>
                </S.SideTab>
                <S.SideTab>
                  <Ico s={18} vb={18} c="#aaa" w={1.6}>
                    <rect x="1" y="1" width="8" height="6" fill="#777" stroke="none" />
                    <path d="M4 8l-3 4 3 4M14 8l3 4-3 4M6 9l6 6M12 9l-6 6" />
                  </Ico>
                </S.SideTab>
              </S.SideTabs>
              <S.SideTabs $top={648}>
                <S.SideTab>
                  <svg width="20" height="20" viewBox="0 0 20 20"><rect width="20" height="20" rx="2" fill="#333" /><rect x="2" y="3" width="16" height="14" fill="#1d5ec4" /><path d="M4 14V6l2 4 2-4v8M11 6v8M15.5 6L11 10l4.5 4" fill="none" stroke="#dfe7f5" strokeWidth="1.3" /></svg>
                </S.SideTab>
                <S.SideTab>
                  <svg width="20" height="20" viewBox="0 0 20 20"><rect width="20" height="20" rx="2" fill="#e8e8e8" /><path d="M7 3c-3 4-3 10 0 14M2 10h4M4 8l-2 2 2 2M9 6l4-2 4 2v6l-4 2-4-2zM9 6l4 2 4-2M13 8v6M17 3c2 4 2 10 0 14" fill="none" stroke="#444" strokeWidth="1" /></svg>
                </S.SideTab>
              </S.SideTabs>

              <S.MeasureTools>
                <Ico s={18} vb={18} w={1.2}>
                  <path d="M1 10h9a4 4 0 1 1 7-2v5H1zM4 13v-1M7 13v-1M10 13v-1" />
                  <circle cx="13" cy="7" r="1.5" />
                </Ico>
                <Ico s={18} vb={18} w={1.2}>
                  <path d="M1 15a8 8 0 0 1 16 0zM5 15a4 4 0 0 1 8 0M9 7v3M4 10l2 1M14 10l-2 1" />
                </Ico>
                <Ico s={18} vb={18} w={1.2}>
                  <path d="M9 2v12M3 4h12M1 10l2-6 2 6zM13 10l2-6 2 6zM1 10h4M13 10h4M2 15h14" />
                </Ico>
              </S.MeasureTools>
            </S.Viewport>
          </S.Canvas>
        </S.Workspace>
      </S.Main>

      <S.Footer>
        <S.FooterRail>
          <Ico s={18} vb={18} w={1.5}><path d="M1 3h12l3 3" /><circle cx="10" cy="10" r="4" /><path d="M13 13l3 3" strokeWidth="2" /></Ico>
        </S.FooterRail>
        <S.StatusBar>
          Right-click on a row to perform actions
          <svg width="12" height="12" viewBox="0 0 17 17"><circle cx="8.5" cy="8.5" r="8" fill="#777" /><path d="M6 6.5a2.5 2.5 0 1 1 3.5 2.3c-.7.3-1 .8-1 1.5" fill="none" stroke="#222" strokeWidth="2" /><circle cx="8.5" cy="13" r="1.2" fill="#222" /></svg>
        </S.StatusBar>
        <S.AddTab>
          <Ico s={15} vb={15} w={2.4}><path d="M7.5 1v13M1 7.5h13" /></Ico>
        </S.AddTab>
        <S.Crumbs>
          <S.HomeCrumb>
            <svg width="18" height="16" viewBox="0 0 18 16"><path d="M9 1l8 7h-2v7h-4v-5H7v5H3V8H1z" fill="#999" /></svg>
          </S.HomeCrumb>
          <S.CrumbArrow viewBox="0 0 14 24"><path d="M1 0l7 12-7 12" fill="none" stroke="#444" strokeWidth="1.2" /></S.CrumbArrow>
          <Ico s={17} vb={17} c="#888" w={1.2}><path d="M1 3h5l2 2h8v9H1z" /></Ico>
          <S.Spacer $w={4} />
          Powerplay
        </S.Crumbs>
        <S.FileTab>
          <Ico s={16} vb={16} c="#888" w={1.2}><path d="M1 6l4-1v10H1zM6 4l4-3 3 1v13H7" /><path d="M10 2v13" /></Ico>
          Slide insert
        </S.FileTab>
        <S.FileTab><CubeIcon s={16} c="#999" />Powerplay insert asse...</S.FileTab>
        <S.FileTab $active><CubeIcon s={16} c="#aaa" />slide assembly left</S.FileTab>
      </S.Footer>

      <S.Taskbar>
        <svg width="16" height="16" viewBox="0 0 16 16" fill="#fff">
          <path d="M0 2.2L6.8 1.2V7.5H0zM7.6 1.100L16 0V7.5H7.600zM0 8.300H6.800V14.700L0 13.800zM7.600 8.300H16V16L7.600 14.900z" />
        </svg>
        <S.TaskSearch>
          <Ico s={17} vb={17} c="#ddd" w={1.3}><circle cx="10.5" cy="6.5" r="5.5" /><path d="M6.5 10.5L1 16" /></Ico>
          Type here to search
        </S.TaskSearch>
        <S.TaskApps>
          <S.TaskApp>
            <svg width="24" height="24" viewBox="0 0 24 24"><circle cx="12" cy="12" r="11" fill="#172a4c" stroke="#2aa0d8" strokeWidth="1.5" /><circle cx="12" cy="12" r="7" fill="#8da6d0" /><path d="M11 3v9l-5-5z" fill="#172a4c" /></svg>
          </S.TaskApp>
          <S.TaskApp $open>
            <svg width="24" height="24" viewBox="0 0 24 24"><circle cx="12" cy="12" r="12" fill="#5865f2" /><path d="M7 8c3-1.5 7-1.5 10 0 1.5 2.500 2 5 2 7.500-1 1-2.500 1.500-3.500 1.500l-1-1.500h-5l-1 1.500C7.500 17 6 16.500 5 15.500 5 13 5.500 10.500 7 8z" fill="#fff" /><circle cx="9.500" cy="12.500" r="1.500" fill="#5865f2" /><circle cx="14.500" cy="12.500" r="1.500" fill="#5865f2" /></svg>
          </S.TaskApp>
          <S.TaskApp>
            <svg width="24" height="24" viewBox="0 0 24 24"><rect width="24" height="24" rx="3" fill="#1d1d1a" /><circle cx="12" cy="11.500" r="9" fill="none" stroke="#c69320" strokeWidth="1.200" /><path d="M8 8h8l-1 2H10l-1 2h5l-1 2H7z" fill="#e0aa22" /></svg>
          </S.TaskApp>
          <ChromeApp badge="#1769c4" open />
          <ChromeApp badge="#3a1310" open current />
          <S.TaskApp $open>
            <svg width="22" height="20" viewBox="0 0 22 20"><path d="M0 2h8l2 2h12v14H0z" fill="#f0c33c" /><path d="M0 4h8l2-2" fill="#d99e22" /><path d="M7 11h8v2h2v7H5v-7h2z" fill="#3e9be0" /><rect x="9" y="14" width="4" height="6" fill="#f0c33c" /></svg>
          </S.TaskApp>
          <S.TaskApp $open>
            <svg width="24" height="24" viewBox="0 0 24 24"><rect width="24" height="24" rx="3" fill="#0fb35a" /><rect x="5" y="4" width="14" height="16" fill="#fff" /><path d="M12 4v16" stroke="#0fb35a" strokeWidth="2" /><path d="M5 12l7-2 7 2" stroke="#0fb35a" fill="none" strokeWidth="1.5" /></svg>
          </S.TaskApp>
          <S.TaskApp $open>
            <svg width="20" height="20" viewBox="0 0 20 20"><circle cx="10" cy="10" r="5.5" fill="none" stroke="#fff" strokeWidth="3" /><circle cx="10" cy="10" r="8" fill="none" stroke="#fff" strokeWidth="3" strokeDasharray="3.5 2.8" /></svg>
          </S.TaskApp>
        </S.TaskApps>
        <S.Tray>
          <Ico s={13} vb={13} c="#e8e8e8" w={1.2}><path d="M1 9l5.500-5L12 9" /></Ico>
          <Ico s={17} vb={17} c="#d8e0e0" w={1.1}>
            <path d="M6 14l6-11 2 1-6 11zM4 10a3 3 0 0 0 0 6M13 5l3 3" />
          </Ico>
          <S.Clock>2:53 PM<br />7/4/2024</S.Clock>
          <Ico s={18} vb={18} c="#eee" w={1.2}><path d="M2 2h14v11h-4l-3 3-3-3H2z" /></Ico>
          <S.ShowDesktop />
        </S.Tray>
      </S.Taskbar>
    </S.Page>
  );
};

function ChromeApp({ badge, open, current }: { badge: string; open?: boolean; current?: boolean }) {
  return (
    <S.TaskApp $open={open} $current={current}>
      <svg width="24" height="24" viewBox="0 0 24 24">
        <circle cx="12" cy="12" r="11" fill="#e33b2e" />
        <path d="M12 12L2.500 6.500A11 11 0 0 0 12 23z" fill="#2ea44f" />
        <path d="M12 12l9.500-5.500A11 11 0 0 1 12 23z" fill="#fbc02d" />
        <circle cx="12" cy="12" r="5.500" fill="#fff" />
        <circle cx="12" cy="12" r="4.200" fill="#3c82f0" />
        <circle cx="19" cy="19" r="5" fill={badge} />
      </svg>
    </S.TaskApp>
  );
}

export default App;
